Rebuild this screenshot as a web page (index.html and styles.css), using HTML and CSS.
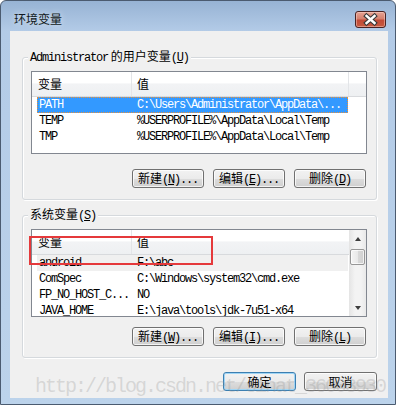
FILE: index.html
```html
<!DOCTYPE html>
<html lang="zh">
<head>
    <meta charset="UTF-8">
    <title>环境变量</title>
    <link rel="stylesheet" href="styles.css">
</head>
<body>

<div class="window">
    <div class="titlebar">
        <span class="title">环境变量</span>
        <div class="close">
            <svg width="29" height="15" viewBox="0 0 29 15">
                <path d="M10.5 4 L18.5 11 M18.5 4 L10.5 11" stroke="#3a3a3a" stroke-width="4.6" stroke-linecap="square" fill="none"/>
                <path d="M10.5 4 L18.5 11 M18.5 4 L10.5 11" stroke="#fff" stroke-width="2.4" stroke-linecap="square" fill="none"/>
            </svg>
        </div>
    </div>

    <div class="client">
        <div class="group">
            <div class="group-title"><span class="en">Administrator</span> 的用户变量<span class="en">(<u>U</u>)</span></div>
            <div class="list list-user">
                <div class="list-main">
                    <div class="list-head"><span>变量</span><span>值</span><span></span></div>
                    <div class="row selected"><span>PATH</span><span>C:\Users\Administrator\AppData\...</span></div>
                    <div class="row"><span>TEMP</span><span>%USERPROFILE%\AppData\Local\Temp</span></div>
                    <div class="row"><span>TMP</span><span>%USERPROFILE%\AppData\Local\Temp</span></div>
                </div>
            </div>
            <div class="buttons">
                <button class="btn">新建<span class="en">(<u>N</u>)...</span></button>
                <button class="btn">编辑<span class="en">(<u>E</u>)...</span></button>
                <button class="btn">删除<span class="en">(<u>D</u>)</span></button>
            </div>
        </div>

        <div class="group group-system">
            <div class="group-title">系统变量<span class="en">(<u>S</u>)</span></div>
            <div class="list list-system">
                <div class="list-main">
                    <div class="list-head"><span>变量</span><span>值</span></div>
                    <div class="row inactive"><span>android</span><span>F:\abc</span></div>
                    <div class="row"><span>ComSpec</span><span>C:\Windows\system32\cmd.exe</span></div>
                    <div class="row"><span>FP_NO_HOST_C...</span><span>NO</span></div>
                    <div class="row"><span>JAVA_HOME</span><span>E:\java\tools\jdk-7u51-x64</span></div>
                </div>
                <div class="scrollbar">
                    <div class="sb-btn"><i class="arrow-up"></i></div>
                    <div class="sb-track"><div class="sb-thumb"></div></div>
                    <div class="sb-btn"><i class="arrow-down"></i></div>
                </div>
            </div>
            <div class="buttons buttons-system">
                <button class="btn">新建<span class="en">(<u>W</u>)...</span></button>
                <button class="btn">编辑<span class="en">(<u>I</u>)...</span></button>
                <button class="btn">删除<span class="en">(<u>L</u>)</span></button>
            </div>
        </div>

        <div class="dialog-buttons">
            <button class="btn btn-wide default">确定</button>
            <button class="btn btn-wide">取消</button>
        </div>
    </div>

    <!-- annotation and watermark drawn over the dialog -->
    <div class="mark-box"></div>
    <div class="watermark">http://blog.csdn.net/sinat_36003930</div>
</div>

</body>
</html>
```

FILE: styles.css
```css
* {
    box-sizing: border-box;
}

body {
    margin: 0;
    background: #fff;
    font-family: "Noto Sans CJK SC", "Liberation Sans", sans-serif;
    font-size: 12px;
    color: #000;
}

.en {
    font-family: "Liberation Mono", monospace;
    letter-spacing: -1.2px;
}

.window {
    position: relative;
    width: 396px;
    height: 405px;
    border: 1px solid #4b5b70;
    border-radius: 6px 6px 0 0;
    background: linear-gradient(#97b3d4, #b3cbe7 30px, #bcd3eb);
    display: flex;
    flex-direction: column;
    overflow: hidden;
}

.titlebar {
    height: 30px;
    display: flex;
    align-items: flex-start;
    padding-left: 13px;
}

.title {
    padding-top: 11px;
    line-height: 14px;
    color: #101820;
    text-shadow: 0 0 6px rgba(255, 255, 255, 0.7);
}

.close {
    margin: 10px 9px 0 auto;
    width: 31px;
    height: 17px;
    border: 1px solid #4a2222;
    border-radius: 3px;
    background: linear-gradient(#e6a394, #d5806e 45%, #c24a36 55%, #c65a40);
    box-shadow: inset 0 0 0 1px rgba(255, 220, 210, 0.45);
}

.close svg {
    display: block;
}

.client {
    flex: 1;
    margin: 0 7px 6px 9px;
    background: #f0f0f0;
    padding: 0 11px 0 12px;
}

.group {
    margin-top: 26px;
    border: 1px solid #d5d9dd;
    border-radius: 3px;
    padding: 0 9px 11px 8px;
    box-shadow: inset 1px 1px 0 #fff, 1px 1px 0 #fff;
}

.group-system {
    margin-top: 15px;
}

.group-title {
    display: block;
    width: max-content;
    margin: -9px 0 0 -3px;
    padding: 0 2px;
    line-height: 14px;
    background: #f0f0f0;
}

.list {
    margin-top: 6px;
    border: 1px solid #828790;
    background: #fff;
    display: flex;
    overflow: hidden;
}

.list-user {
    height: 83px;
}

.list-system {
    height: 88px;
}

.list-main {
    flex: 1;
    overflow: hidden;
}

.list-head {
    display: grid;
    grid-template-columns: 100px 217px 1fr;
    height: 25px;
    background: linear-gradient(#fff 45%, #f2f3f5 50%, #eef0f2);
    border-bottom: 1px solid #d8dadd;
}

.list-system .list-head {
    grid-template-columns: 100px 217px;
}

.list-head span {
    line-height: 23px;
    padding-left: 6px;
    border-right: 1px solid #e3e5e8;
}

.list-head span + span {
    padding-left: 5px;
}

.list-head span:last-child {
    border-right: none;
}

.list-user .list-head span:nth-child(2) {
    border-right: 1px solid #e3e5e8;
}

.row {
    display: grid;
    grid-template-columns: 94px 217px;
    width: 311px;
    height: 16px;
    margin-left: 5px;
    font-family: "Liberation Mono", monospace;
    letter-spacing: -1.2px;
    line-height: 16px;
    white-space: nowrap;
}

.row span {
    overflow: hidden;
    padding-left: 2px;
}

.row span + span {
    padding-left: 6px;
}

.row.selected {
    background: #3399ff;
    color: #fff;
    outline: 1px dotted #e8913a;
    outline-offset: -1px;
}

.row.inactive {
    background: #f0f0f0;
}

.scrollbar {
    width: 17px;
    display: flex;
    flex-direction: column;
    background: linear-gradient(90deg, #e4e4e4, #f3f3f3 35%, #f3f3f3 70%, #e9e9e9);
}

.sb-btn {
    height: 17px;
    display: flex;
    align-items: center;
    justify-content: center;
}

.arrow-up, .arrow-down {
    width: 0;
    height: 0;
    border-left: 3.5px solid transparent;
    border-right: 3.5px solid transparent;
}

.arrow-up {
    border-bottom: 4px solid #3d3d3d;
}

.arrow-down {
    border-top: 4px solid #3d3d3d;
}

.sb-track {
    flex: 1;
    padding: 2px 1px 0 1px;
}

.sb-thumb {
    height: 16px;
    border: 1px solid #979797;
    border-radius: 2px;
    background: linear-gradient(90deg, #f4f4f4, #e9e9e9 50%, #d9d9d9 51%, #d0d0d0);
    box-shadow: inset 0 0 0 1px rgba(255, 255, 255, 0.7);
}

.buttons {
    margin-top: 15px;
    margin-right: 1px;
    display: flex;
    justify-content: flex-end;
    gap: 9px;
}

.buttons-system {
    margin-top: 10px;
}

.btn {
    width: 72px;
    height: 19px;
    padding: 0;
    font-family: "Noto Sans CJK SC", sans-serif;
    font-size: 12px;
    line-height: 15px;
    color: #000;
    border: 1px solid #707070;
    border-radius: 3px;
    background: linear-gradient(#f2f2f2, #ebebeb 50%, #dddddd 51%, #cfcfcf);
    box-shadow: inset 0 0 0 1px rgba(255, 255, 255, 0.75);
    white-space: nowrap;
}

.btn u {
    text-decoration: underline;
}

.dialog-buttons {
    margin-top: 14px;
    display: flex;
    justify-content: flex-end;
    gap: 8px;
}

.btn-wide {
    width: 73px;
}

.btn.default {
    border-color: #3c7fb1;
    box-shadow: inset 0 0 0 1px #9fd5f5;
}

.mark-box {
    position: absolute;
    left: 28px;
    top: 235px;
    width: 184px;
    height: 29px;
    border: 2px solid #e5393b;
    pointer-events: none;
}

.watermark {
    position: absolute;
    left: 34px;
    top: 376px;
    font-family: "Liberation Mono", monospace;
    font-size: 20px;
    line-height: 20px;
    letter-spacing: -2px;
    color: rgba(150, 150, 150, 0.3);
    white-space: nowrap;
    pointer-events: none;
}
```
